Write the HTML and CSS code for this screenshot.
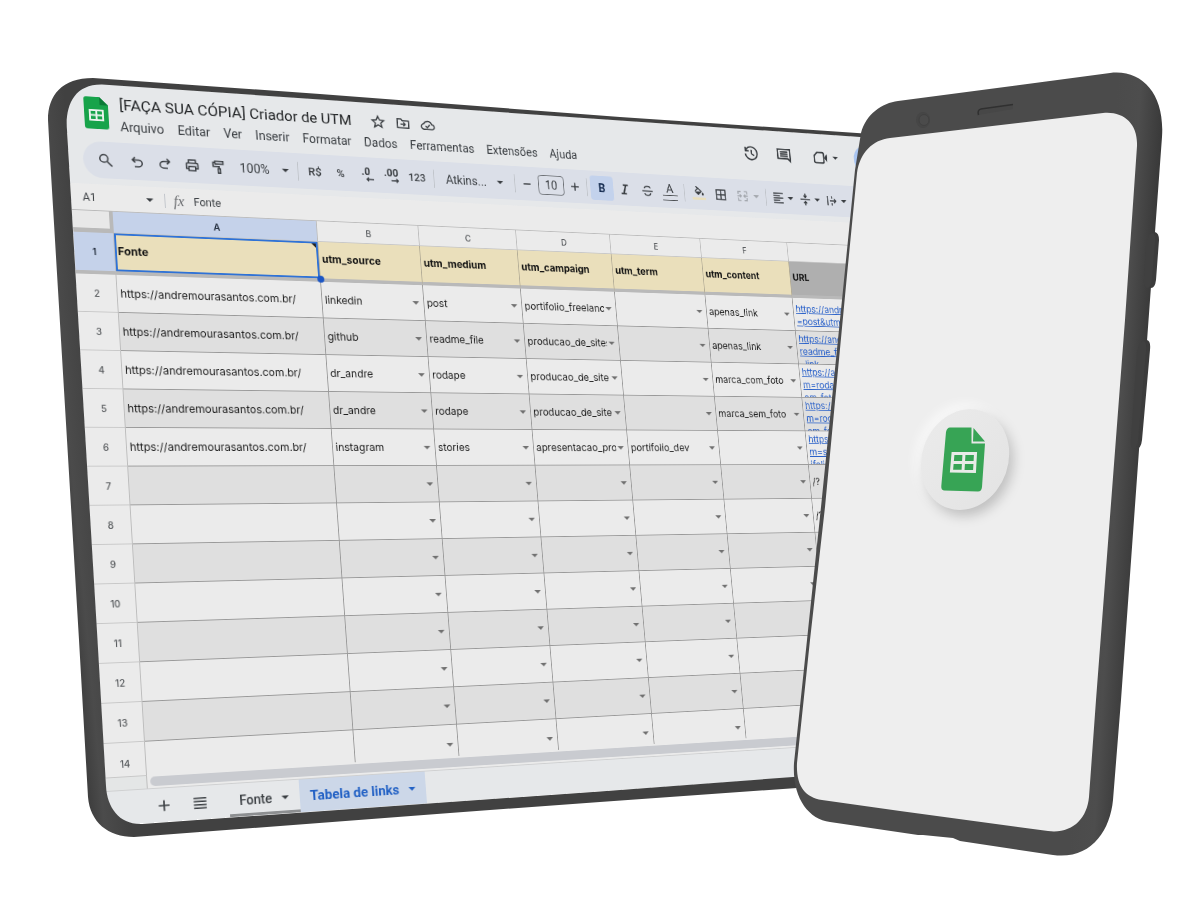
FILE: index.html
```html
<!DOCTYPE html>
<html lang="pt-BR">
<head>
<meta charset="utf-8">
<title>Criador de UTM</title>
<link rel="stylesheet" href="styles.css">
</head>
<body>
<main class="stage">
  <section class="screen">
    <header class="topbar">
      <svg class="logo" viewBox="0 0 26 36" aria-hidden="true"><path fill="#17a34a" d="M3 0h14l9 9v24a3 3 0 0 1-3 3H3a3 3 0 0 1-3-3V3a3 3 0 0 1 3-3z"/><path fill="#0b7a36" d="M17 0l9 9h-9z"/><path fill="none" stroke="#ecf3ee" stroke-width="2" d="M6 15h14v11H6zM13 15v11M6 20.500h14"/></svg>
      <div class="heading">
        <div class="title-row">
          <h1>[FAÇA SUA CÓPIA] Criador de UTM</h1>
          <button aria-label="Com estrela"><svg viewBox="0 0 24 24"><path d="M12 3l2.700 6 6.500.600-4.900 4.300 1.500 6.400L12 16.900l-5.800 3.400 1.500-6.400-4.900-4.300 6.500-.600z"/></svg></button>
          <button aria-label="Mover"><svg viewBox="0 0 24 24"><path d="M3 5h6l2 2.500h10V19H3zM8 13.200h7M12.500 10l3 3.200-3 3.200"/></svg></button>
          <button aria-label="Status do documento"><svg viewBox="0 0 24 24"><path d="M6.500 19a4.500 4.500 0 0 1-.6-9A6.500 6.500 0 0 1 18.300 11a4 4 0 0 1 .2 8zM8.500 13.500l2.500 2.500 4.500-4.500"/></svg></button>
        </div>
        <nav class="menus">
          <button>Arquivo</button><button>Editar</button><button>Ver</button><button>Inserir</button><button>Formatar</button><button>Dados</button><button>Ferramentas</button><button>Extensões</button><button>Ajuda</button>
        </nav>
      </div>
      <div class="actions">
        <button aria-label="Histórico"><svg viewBox="0 0 24 24"><path d="M4 4v5h5M4.200 9A8.500 8.500 0 1 1 3.700 13M12.500 7.500v5l3.700 2.700"/></svg></button>
        <button aria-label="Comentários"><svg viewBox="0 0 24 24"><path d="M3 4h18v16l-3.500-3.500H3zM6.500 7.500h11M6.500 10.300h11M6.500 13h11"/></svg></button>
        <button class="meet" aria-label="Chamada"><svg viewBox="0 0 24 24"><path d="M7.500 5H15a2 2 0 0 1 2 2v10a2 2 0 0 1-2 2H5a2 2 0 0 1-2-2V9.500z"/><path class="solid" d="M18 11l4-4.500v11L18 13z"/></svg><i class="caret"></i></button>
        <button class="share" aria-label="Compartilhar"></button>
      </div>
    </header>

    <div class="toolbar">
      <button class="search" aria-label="Pesquisar"><svg viewBox="0 0 24 24"><circle cx="9.500" cy="9" r="5.800"/><path d="M14 13.500l7 7"/></svg></button>
      <button aria-label="Desfazer"><svg viewBox="0 0 24 24"><path d="M9 4.500L5 8.500l4 4M5.500 8.500H14a4.800 4.800 0 0 1 0 10H8"/></svg></button>
      <button aria-label="Refazer"><svg viewBox="0 0 24 24"><path d="M15 4.500l4 4-4 4M18.500 8.500H10a4.800 4.800 0 0 0 0 10h6"/></svg></button>
      <button aria-label="Imprimir"><svg viewBox="0 0 24 24"><path d="M7 8V4h10v4M7 17H3.500v-6.500A2 2 0 0 1 5.500 8.500h13a2 2 0 0 1 2 2V17H17M7 14h10v6H7z"/></svg></button>
      <button aria-label="Pintar formatação"><svg viewBox="0 0 24 24"><path d="M6 3.500h12v4.500H6zM6 5.500H3v6h9v3M10.300 15h3.500v6.500h-3.500z"/></svg></button>
      <button class="zoom">100%<i class="caret"></i></button>
      <span class="sep"></span>
      <button class="unit">R$</button>
      <button class="unit">%</button>
      <button class="decimal" aria-label="Diminuir casas decimais">.0<svg viewBox="0 0 12 6"><path d="M11 3H2M4.500.500L2 3l2.500 2.500"/></svg></button>
      <button class="decimal" aria-label="Aumentar casas decimais">.00<svg viewBox="0 0 12 6"><path d="M1 3h9M7.500.500L10 3 7.500 5.500"/></svg></button>
      <button class="format">123</button>
      <span class="sep"></span>
      <button class="font">Atkins...<i class="caret"></i></button>
      <span class="sep"></span>
      <button class="step" aria-label="Diminuir"><svg viewBox="0 0 24 24"><path d="M6 12h12"/></svg></button>
      <input class="size" aria-label="Tamanho da fonte" value="10">
      <button class="step" aria-label="Aumentar"><svg viewBox="0 0 24 24"><path d="M5.500 12h13M12 5.500v13"/></svg></button>
      <span class="sep"></span>
      <button class="bold">B</button>
      <button aria-label="Itálico"><svg class="heavy" viewBox="0 0 24 24"><path d="M9 5h9M6 19h9M14 5l-4 14"/></svg></button>
      <button aria-label="Tachado"><svg viewBox="0 0 24 24"><path d="M3 12.500h18M17 8c0-2-2-3.500-5-3.500S7 6 7 8.200M7 16c0 2.200 2 3.700 5 3.700s5-1.500 5-3.700"/></svg></button>
      <button class="ink">A</button>
      <span class="sep"></span>
      <button aria-label="Cor de preenchimento"><svg class="fill" viewBox="0 0 24 24"><path d="M7 0l4 4M5.500 8L11 3l6 6"/><path class="solid" d="M4.500 8.500h13L11 14.500zM19 9.500s2 2.200 2 3.500a2 2 0 0 1-4 0c0-1.300 2-3.500 2-3.500z"/><path class="swatch" d="M0 20.500h24"/></svg></button>
      <button aria-label="Bordas"><svg viewBox="0 0 24 24"><path d="M4 4h16v16H4zM12 4v16M4 12h16"/></svg></button>
      <button class="split merge" aria-label="Mesclar células"><svg viewBox="0 0 24 24"><path d="M4 9V4.500h5M15 4.500h5V9M4 15v4.500h5M15 19.500h5V15M2.500 12H9M7 9.500L9.500 12 7 14.500M21.500 12H15M17 9.500L14.500 12l2.500 2.500"/></svg><i class="caret"></i></button>
      <span class="sep"></span>
      <button class="split" aria-label="Alinhamento horizontal"><svg viewBox="0 0 24 24"><path d="M3 4h18M3 8h12M3 12h18M3 16h12M3 20h18"/></svg><i class="caret"></i></button>
      <button class="split" aria-label="Alinhamento vertical"><svg viewBox="0 0 24 24"><path d="M3 12h18M12 2v6M9 5.500l3 3 3-3M12 22v-6M9 18.500l3-3 3 3"/></svg><i class="caret"></i></button>
      <button class="split" aria-label="Quebra de texto"><svg viewBox="0 0 24 24"><path d="M4 4v16M12 4v4M12 16v4M8 12h11M16 8.500l3.500 3.500-3.500 3.500"/></svg><i class="caret"></i></button>
    </div>

    <div class="formula">
      <button class="namebox">A1<i class="caret"></i></button>
      <span class="sep"></span>
      <span class="fx">fx</span>
      <input class="formula-input" aria-label="Fórmula" value="Fonte">
    </div>

    <div class="sheet">
      <table>
        <colgroup><col class="c-num"><col class="c-a"><col class="c-n"><col class="c-n"><col class="c-n"><col class="c-n"><col class="c-n"><col class="c-url"></colgroup>
        <thead>
          <tr class="letters"><td class="corner"></td><th class="picked">A</th><th>B</th><th>C</th><th>D</th><th>E</th><th>F</th><th></th></tr>
          <tr class="frozen"><th class="picked">1</th><td class="active">Fonte</td><td>utm_source</td><td>utm_medium</td><td>utm_campaign</td><td>utm_term</td><td>utm_content</td><td class="urlhead">URL</td></tr>
        </thead>
        <tbody id="rows"></tbody>
      </table>
      <div class="scroll"><span class="scroll-gap"></span><span class="thumb"></span></div>
    </div>

    <footer class="tabs">
      <button class="icon-btn" aria-label="Adicionar página"><svg viewBox="0 0 24 24"><path d="M4.500 12h15M12 4.500v15"/></svg></button>
      <button class="icon-btn" aria-label="Todas as páginas"><svg viewBox="0 0 24 24"><path d="M3 5h18M3 9.700h18M3 14.300h18M3 19h18"/></svg></button>
      <button class="tab">Fonte<i class="caret"></i></button>
      <button class="tab current">Tabela de links<i class="caret"></i></button>
    </footer>
  </section>

  <svg class="device" viewBox="0 0 1200 900" role="img" aria-label="Tablet e celular">
    <defs>
      <linearGradient id="tabletBody" x1="48" y1="400" x2="92" y2="396" gradientUnits="userSpaceOnUse">
        <stop offset="0" stop-color="#3a3a3a"/><stop offset=".4" stop-color="#4b4b4b"/><stop offset="1" stop-color="#414141"/>
      </linearGradient>
      <linearGradient id="phoneBody" x1="1094" y1="450" x2="1142" y2="453" gradientUnits="userSpaceOnUse">
        <stop offset="0" stop-color="#4b4b4b"/><stop offset=".5" stop-color="#4d4d4d"/><stop offset="1" stop-color="#393939"/>
      </linearGradient>
      <linearGradient id="disc" x1="0" y1="0" x2="1" y2="1">
        <stop offset="0" stop-color="#ebebeb"/><stop offset="1" stop-color="#e3e3e3"/>
      </linearGradient>
    </defs>
    <path fill="url(#tabletBody)" fill-rule="evenodd" d="M48 120C48 95 62 78 93 78L320 94L620 117L930 138L930 779L797 788L600 802L450 813L134 837C108 837 90 822 88 797L79 640L70 490L58 290L50 157ZM67 130C65 106 74 84 102 84.500L320 99.500L620 120.500L860 137L925 141.500L925 768L793 777L600 791.500L450 802L142 824C120 825 107 808 106 786L97.500 640L88.500 490L76.500 290Z"/>
    <path fill="#3c3c3c" d="M1148 240Q1150 232 1155 232Q1159 233 1159 240L1156 280Q1155 288 1151 288H1146ZM1138 346Q1141 340 1147 340Q1151 341 1150 350L1142 440Q1141 449 1136 449H1131Z"/>
    <path fill="url(#phoneBody)" d="M861 133C866 114 882 103 898 101L1110 73C1142 69 1165 94 1162 137L1155 232L1139 450L1121 700L1113 800C1110 832 1090 860 1053 855L960 841L953 838L923 835L918 835L830 822C808 819 792 797 794 763L807 640L821 507L843 290L855 170Z"/>
    <path fill="#404040" d="M1146 244Q1148 233 1153 233Q1156 235 1155 242L1152 279Q1151 288 1147 288Q1143 287 1144 278ZM1137 352Q1139 341 1144 341Q1147 343 1146 352L1138 440Q1137 448 1133 449Q1130 447 1131 438Z"/>
    <path fill="#eee" d="M857 173C860 152 873 140 890 138L1103 113C1124 111 1138 124 1137 146L1125 320L1096 700L1089 797C1087 819 1072 834 1048 831L900 811L822 800C805 797 796 786 797 763L810 640L825 507L847 275Z"/>
    <ellipse cx="923" cy="120" rx="7" ry="8" fill="#464646"/><ellipse cx="924" cy="120" rx="5" ry="5.500" fill="#4b4b4b" stroke="#414141"/>
    <path fill="#474747" d="M978 115V111L1013 105V109Z"/>
    <path fill="none" stroke="#303030" stroke-width="1.500" d="M978.500 115Q977 110 981 109L1013 104.500"/>
    <g class="badge">
      <circle r="1" fill="url(#disc)" transform="matrix(44.2 -6 0 50.1 965 459.500)"/>
    </g>
    <path fill="#37a455" d="M950 427.500H971.500V443.500H985L982 487Q981.500 491.500 978 491.500L944 490.500Q941 490 941.300 486L946 432Q947 427.500 950 427.500ZM973.500 428L985 441.500H973Z"/>
    <path fill="none" stroke="#e8ebe8" stroke-width="3" d="M953 453.500L975.500 453.500L974.500 471.500L951.500 471ZM964 453.500L963 471M952.500 462.500H975"/>
  </svg>
</main>
<script src="rows.js"></script>
</body>
</html>
```
FILE: styles.css
```css
* { box-sizing: border-box; }
body { margin: 0; min-height: 100vh; background: #fff; overflow: hidden; font-family: Roboto, "Liberation Sans", sans-serif; }
button, input, select { font: inherit; color: inherit; background: none; border: 0; padding: 0; margin: 0; }
button { display: flex; align-items: center; justify-content: center; }
svg { display: block; }

.stage { position: relative; width: 1200px; height: 900px; margin: 0 auto; }
.device { position: absolute; inset: 0; width: 1200px; height: 900px; pointer-events: none; }

/* The sheet is laid out flat, then tilted as one plane to sit in the tablet. */
.screen {
  position: absolute; left: 0; top: 0; width: 1050px;
  display: flex; flex-direction: column; overflow: hidden;
  border-radius: 30px 0 0 30px; background: #e6e8ea; color: #3a3e42;
  transform-origin: 0 0;
  transform: matrix3d(.962563, .081207, 0, .00017882, .049722, .894017, 0, -.00004894, 0, 0, 1, 0, 64.9395, 82.0496, 0, 1.0069494);
}
.screen svg { width: 18px; height: 18px; flex: none; fill: none; stroke: currentColor; stroke-width: 2; }
.screen svg .solid { fill: currentColor; stroke: none; }
.screen .swatch { stroke: #eadfbb; stroke-width: 4; }
.screen svg.heavy { stroke-width: 2.8; }
.caret { flex: none; width: 0; height: 0; border: 4px solid transparent; border-top-color: currentColor; border-bottom: 0; }

.topbar { display: flex; height: 65px; }
.screen .logo { width: 26px; height: 36px; margin: 15px 12px 0 19px; stroke: none; }
.heading { padding-top: 10px; }
.title-row { display: flex; align-items: center; height: 24px; }
.title-row h1 { margin: 0 11px 0 0; width: 268px; white-space: nowrap; font-size: 17px; font-weight: 400; color: #1f2123; }
.title-row button { width: 30px; height: 24px; }
.menus { display: flex; gap: 15px; height: 28px; font-size: 14px; }
.menus button { height: 26px; }
.actions { display: flex; align-items: center; margin-left: auto; height: 60px; }
.actions button { width: 46px; height: 30px; }
.screen .actions svg { width: 23px; height: 23px; }
.actions .meet { width: 60px; gap: 6px; padding-left: 12px; }
.actions .share { width: 72px; height: 38px; margin-left: 18px; border-radius: 19px 0 0 19px; background: #a9c5f1; }

.toolbar { display: flex; align-items: center; height: 41px; margin-left: 15px; padding-left: 9px; border-radius: 21px 0 0 21px; background: #dbdfe8; font-size: 14px; }
.toolbar button { width: 30px; height: 30px; flex: none; }
.toolbar .search { margin-right: 4px; }
.toolbar .zoom { width: 70px; padding: 0 6px 0 8px; justify-content: space-between; }
.toolbar .font { width: 91px; padding: 0 10px; justify-content: space-between; }
.toolbar .unit { font-size: 13px; font-weight: 500; }
.toolbar .format { width: 32px; font-size: 12px; font-weight: 500; }
.toolbar .decimal { flex-direction: column; font-size: 12px; font-weight: 700; line-height: 11px; }
.toolbar .decimal svg { width: 11px; height: 6px; margin-left: 9px; stroke-width: 1.4; }
.toolbar .step { width: 22px; }
.toolbar .size { width: 33px; height: 24px; margin: 0 3px; border: 1px solid #6c7075; border-radius: 4px; text-align: center; }
.toolbar .bold { border-radius: 4px; background: #c3d2ec; color: #12294e; font-weight: 700; }
.toolbar .ink { flex-direction: column; font-size: 15px; line-height: 15px; }
.toolbar .ink::after { content: ""; width: 20px; height: 5px; border: solid #4a4d50; border-width: 1px 0; }
.toolbar .split { width: 38px; gap: 4px; }
.toolbar .merge { width: 43px; gap: 6px; color: #a4a8ae; }
.sep { width: 1px; height: 22px; margin: 0 4px; flex: none; background: #c0c4ca; }

.formula { display: flex; align-items: center; height: 29px; margin-top: 7px; background: #ebebeb; font-size: 12px; }
.formula .namebox { width: 76px; margin: 0 12px; justify-content: space-between; }
.namebox { flex: none; }
.formula .sep { margin: 0; height: 16px; }
.fx { width: 22px; margin: 0 0 0 9px; font: italic 16px "Liberation Serif", serif; color: #6b6d70; }
.formula-input { flex: 1; }

.sheet { background: #ebebeb; }
table { width: 1050px; table-layout: fixed; border-collapse: separate; border-spacing: 0; font-family: Inter, Roboto, sans-serif; font-size: 12px; color: #1c1c1c; }
.c-num { width: 43px; }
.c-a { width: 227px; }
.c-n { width: 120px; }
.c-url { width: 180px; }
th, td { padding: 0; text-align: left; overflow: hidden; white-space: nowrap; }
th { text-align: center; font-size: 10px; font-weight: 500; color: #55585b; border-right: 1px solid #bdbdbd; border-bottom: 1px solid #c8c8c8; }
.letters th, .letters td { height: 25px; border-top: 1px solid #bdbdbd; }
.letters .corner { border: solid #b9b9b9; border-width: 1px 4px 5px 0; background: #e8e8e8; }
th.picked { background: #c5d2ea; color: #1d2736; font-weight: 600; }
.frozen th, .frozen td { height: 46px; border-bottom: 4px solid #b9b9b9; }
.frozen td { position: relative; padding: 0 0 3px 3px; background: #eadfbb; border-right: 1px solid #b3ac96; font-weight: 700; color: #111; }
.frozen .urlhead { background: #afafaf; }
.frozen .active { overflow: visible; }
.active::before { content: ""; position: absolute; inset: 0; border: 2px solid #2f72d6; background: linear-gradient(225deg, #222 3px, transparent 4px); }
.active::after { content: ""; position: absolute; right: -5px; bottom: -5px; width: 8px; height: 8px; border-radius: 50%; background: #1c56c4; z-index: 1; }
tbody th, tbody td { height: 42px; }
tbody td { border: solid #999; border-width: 0 1px 1px 0; }
tbody tr:nth-child(even) td { background: #dfdfdf; }
tbody tr:last-child th, tbody tr:last-child td { height: 35px; padding-top: 8px; border-bottom: 0; }
.link { padding-left: 3px; }
.pick { display: flex; align-items: center; gap: 2px; padding-right: 5px; color: #707070; }
.pick select { appearance: none; flex: 1; min-width: 0; padding-left: 3px; overflow: hidden; white-space: nowrap; text-overflow: clip; color: #1c1c1c; }
.url div { max-height: 41px; overflow: hidden; padding: 2px 0 0 3px; line-height: 16px; }
.url a { color: #2b62c9; text-decoration: underline; }
tbody .url .rest { padding-top: 0; }
.scroll { display: flex; height: 15px; border-bottom: 1px solid #cfd0d1; }
.scroll-gap { width: 43px; border-top: 1px solid #c8c8c8; border-right: 1px solid #bdbdbd; background: #e4e6e6; }
.thumb { flex: 1; height: 10px; margin: 2px 0 0 3px; border-radius: 5px 0 0 5px; background: #c9cbd0; }

.tabs { display: flex; align-items: center; height: 35px; padding-left: 40px; font-size: 14px; font-weight: 500; }
.tabs .icon-btn { width: 38px; height: 35px; }
.tabs .icon-btn svg { stroke-width: 2.2; }
.tabs .tab { height: 35px; padding: 0 12px 0 11px; gap: 11px; }
.tabs .icon-btn + .tab { margin-left: 12px; border-bottom: 3px solid #8d8f91; padding-top: 3px; }
.tabs .current { background: #ccd7e8; color: #2160c4; font-size: 15px; font-weight: 700; }

.badge { filter: drop-shadow(4px 6px 6px #00000033) drop-shadow(-5px -5px 6px #ffffffb0); }
```
FILE: rows.js
```js
const site = "https://andremourasantos.com.br/";
const data = [
  ["linkedin", "post", "portifolio_freelancer", "", "apenas_link", ["https://andremourasantos", "=post&utm_campaign"]],
  ["github", "readme_file", "producao_de_sites", "", "apenas_link", ["https://andremourasantos", "readme_file&utm", "_link"]],
  ["dr_andre", "rodape", "producao_de_site", "", "marca_com_foto", ["https://andremourasantos", "m=rodape&utm", "om_foto"]],
  ["dr_andre", "rodape", "producao_de_site", "", "marca_sem_foto", ["https://andremourasantos", "m=rodape&utm", "em_foto"]],
  ["instagram", "stories", "apresentacao_pro", "portifolio_dev", "", ["https://andremourasantos", "m=stories&utm", "ifolio_dev"]]
];
const names = ["utm_source", "utm_medium", "utm_campaign", "utm_term", "utm_content"];
const body = document.getElementById("rows");
for (let n = 2; n <= 14; n++) {
  const item = data[n - 2];
  const picks = names.map((name, i) =>
    `<td><div class="pick"><select aria-label="${name} ${n}"><option>${item ? item[i] : ""}</option></select><i class="caret"></i></div></td>`
  ).join("");
  const url = item
    ? `<div><a href="#">${item[5].map(s => s.replace("&", "&amp;")).join("<br>")}</a></div>`
    : `<div class="rest">/?</div>`;
  body.insertAdjacentHTML("beforeend",
    `<tr><th>${n}</th><td class="link">${item ? site : ""}</td>${picks}<td class="url">${url}</td></tr>`);
}
```
